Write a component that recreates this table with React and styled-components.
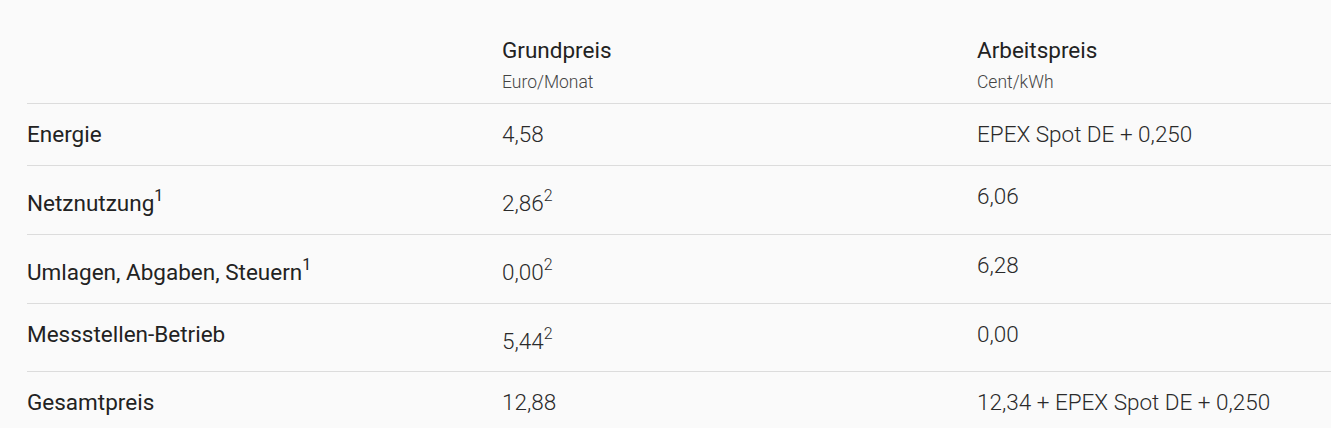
import styled, { createGlobalStyle } from "styled-components";

const GlobalStyle = createGlobalStyle`
  html, body {
    margin: 0;
    background: #fafafa;
    overflow: hidden;
  }
  body {
    font-family: Roboto, "Liberation Sans", sans-serif;
    color: #222;
  }
`;

const rows = [
  { label: "Energie", base: "4,58", work: "EPEX Spot DE + 0,250" },
  { label: "Netznutzung", labelSup: "1", base: "2,86", baseSup: "2", work: "6,06" },
  { label: "Umlagen, Abgaben, Steuern", labelSup: "1", base: "0,00", baseSup: "2", work: "6,28" },
  { label: "Messstellen-Betrieb", base: "5,44", baseSup: "2", work: "0,00" },
  { label: "Gesamtpreis", base: "12,88", work: "12,34 + EPEX Spot DE + 0,250" },
];

const App = () => {
  return (
    <>
      <GlobalStyle />
      <Page>
        <PriceTable>
          <thead>
            <tr>
              <HeadCell />
              <HeadCell>
                <HeadTitle>Grundpreis</HeadTitle>
                <HeadUnit>Euro/Monat</HeadUnit>
              </HeadCell>
              <HeadCell>
                <HeadTitle>Arbeitspreis</HeadTitle>
                <HeadUnit>Cent/kWh</HeadUnit>
              </HeadCell>
            </tr>
          </thead>
          <tbody>
            {rows.map(({ label, labelSup, base, baseSup, work }) => (
              <Row key={label}>
                <LabelCell>
                  {label}
                  {labelSup && <Sup>{labelSup}</Sup>}
                </LabelCell>
                <ValueCell>
                  {base}
                  {baseSup && <Sup>{baseSup}</Sup>}
                </ValueCell>
                <ValueCell>{work}</ValueCell>
              </Row>
            ))}
          </tbody>
        </PriceTable>
      </Page>
    </>
  );
};

export default App;

const Page = styled.div`
  padding: 19px 0 0 27px;
`;

const PriceTable = styled.table`
  width: 1425px;
  border-collapse: collapse;
  table-layout: fixed;
`;

const HeadCell = styled.th`
  width: 475px;
  text-align: left;
  vertical-align: top;
  padding: 16px 0 10px;
  border-bottom: 1px solid #dcdcdc;
`;

const HeadTitle = styled.div`
  font-size: 22.5px;
  line-height: 30px;
  font-weight: 400;
  color: #222;
`;

const HeadUnit = styled.div`
  margin-top: 6px;
  font-size: 17.5px;
  line-height: 22px;
  font-weight: 300;
  color: #444;
`;

const Row = styled.tr`
  border-bottom: 1px solid #dcdcdc;
`;

const LabelCell = styled.td`
  padding: 15px 0 16px;
  vertical-align: top;
  font-size: 22.5px;
  line-height: 30px;
  font-weight: 400;
  color: #222;
`;

const ValueCell = styled(LabelCell)`
  font-weight: 300;
  color: #2a2a2a;
`;

const Sup = styled.sup`
  font-size: 16px;
  vertical-align: 9.75px;
`;
